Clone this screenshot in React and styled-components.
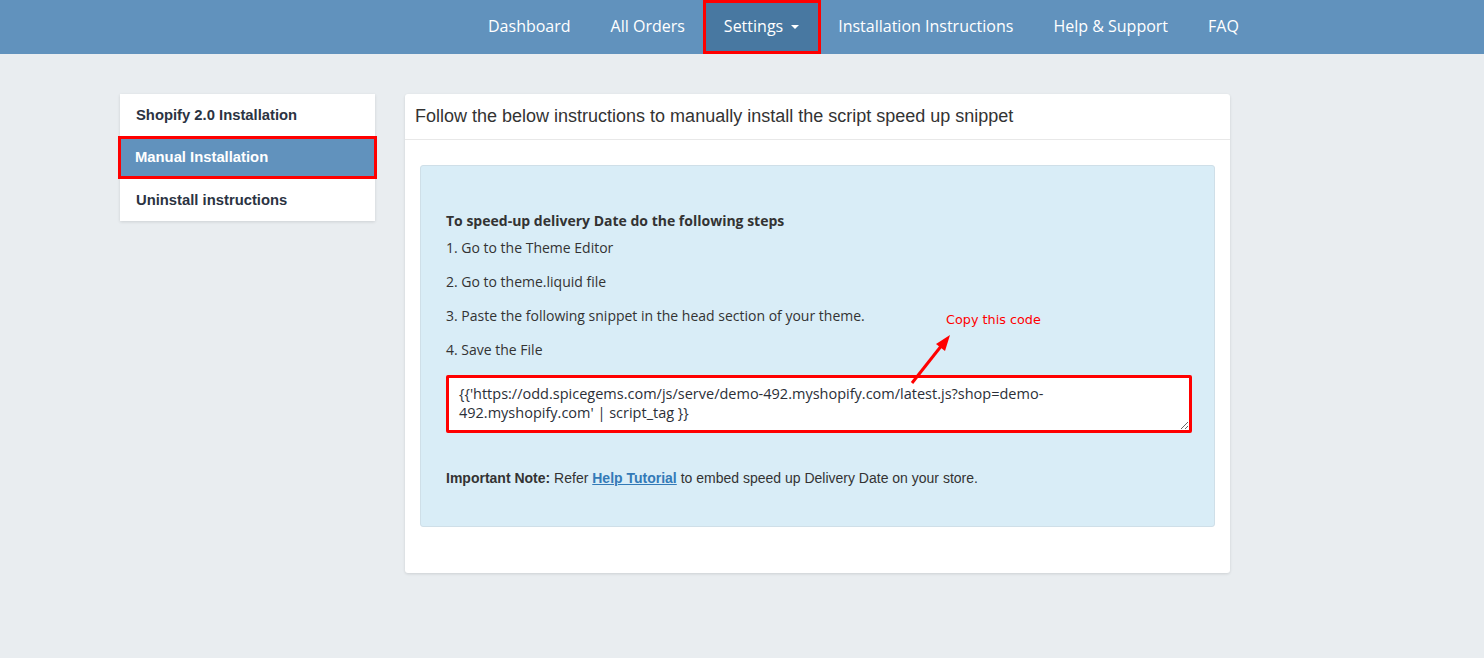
import React from "react";
import styled, { createGlobalStyle } from "styled-components";

const Global = createGlobalStyle`
  html, body { margin: 0; padding: 0; }
  body {
    background: #e9edf0;
    font-family: "Open Sans", Arial, sans-serif;
    min-height: 658px;
  }
  * { box-sizing: border-box; }
`;

const NavBar = styled.nav`
  height: 54px;
  background: #6192bd;
  display: flex;
  padding-left: 468px;
`;

const NavItem = styled.a`
  display: flex;
  align-items: center;
  gap: 8px;
  padding: 0 20px 2px;
  height: 54px;
  color: #fff;
  font-family: "Open Sans", sans-serif;
  font-size: 16px;
  text-decoration: none;
  background: ${(p) => (p.$active ? "#4878a1" : "transparent")};
  border: ${(p) => (p.$active ? "3px solid #ff0000" : "none")};
  ${(p) => p.$active && "padding: 0 19px 2px 18px; margin: 0 -3px 0 -2px;"}
`;

const Caret = styled.span`
  width: 0;
  height: 0;
  border-left: 4px solid transparent;
  border-right: 4px solid transparent;
  border-top: 4px solid #fff;
  margin-top: 2px;
`;

const Main = styled.div`
  display: flex;
  align-items: flex-start;
  gap: 30px;
  padding: 40px 0 0 120px;
`;

const Sidebar = styled.div`
  width: 255px;
  background: #fff;
  box-shadow: 0 1px 3px rgba(0, 0, 0, 0.12);
  display: flex;
  flex-direction: column;
`;

const SideItem = styled.div`
  height: ${(p) => (p.$active ? "43px" : "42px")};
  display: flex;
  align-items: center;
  padding-left: 16px;
  padding-bottom: ${(p) => (p.$active ? "2px" : "0")};
  font-family: "Liberation Sans", Arial, sans-serif;
  font-weight: 700;
  font-size: 14.8px;
  color: ${(p) => (p.$active ? "#fff" : "#2b3342")};
  background: ${(p) => (p.$active ? "#6192bd" : "transparent")};
  ${(p) =>
    p.$active &&
    `border: 3px solid #ff0000; margin: 0 -2px; padding-left: 14px;`}
`;

const Panel = styled.div`
  width: 825px;
  background: #fff;
  border-radius: 3px;
  box-shadow: 0 1px 3px rgba(0, 0, 0, 0.12);
  padding-bottom: 46px;
`;

const PanelHeader = styled.div`
  height: 46px;
  display: flex;
  align-items: center;
  padding-left: 10px;
  font-family: "Liberation Sans", Arial, sans-serif;
  font-size: 18px;
  color: #333;
  border-bottom: 1px solid #e8e8e8;
`;

const Alert = styled.div`
  position: relative;
  margin: 25px 15px 0;
  background: #d9edf7;
  border: 1px solid #cfdfe8;
  border-radius: 3px;
  padding: 45px 26px 38px 25px;
  color: #333;
`;

const Title = styled.div`
  font-family: "Open Sans", sans-serif;
  font-weight: 700;
  font-size: 14px;
  line-height: 20px;
  color: #333;
`;

const Step = styled.div`
  font-family: "Open Sans", sans-serif;
  font-size: 14px;
  line-height: 20px;
  color: #333;
  margin-top: ${(p) => (p.$first ? "7px" : "14px")};
`;

const Code = styled.textarea`
  display: block;
  width: 746px;
  height: 58px;
  margin-top: 15px;
  border: 3px solid #ff0000;
  border-radius: 2px;
  padding: 6px 40px 6px 10px;
  font-family: "Open Sans", sans-serif;
  font-size: 14.5px;
  line-height: 19px;
  color: #2b2f38;
  background: #fff;
  resize: vertical;
  outline: none;
`;

const Note = styled.p`
  margin: 35px 0 0;
  font-family: "Liberation Sans", Arial, sans-serif;
  font-size: 14px;
  line-height: 20px;
  color: #333;
`;

const Link = styled.a`
  color: #337ab7;
  font-weight: 700;
  text-decoration: underline;
`;

const Callout = styled.div`
  position: absolute;
  left: 525px;
  top: 146px;
  color: #ff0000;
  font-family: "DejaVu Sans", sans-serif;
  font-size: 12.8px;
`;

const ArrowSvg = styled.svg`
  position: absolute;
  left: 485px;
  top: 165px;
`;

export default function App() {
  return (
    <>
      <Global />
      <NavBar>
        <NavItem>Dashboard</NavItem>
        <NavItem>All Orders</NavItem>
        <NavItem $active>
          Settings <Caret />
        </NavItem>
        <NavItem>Installation Instructions</NavItem>
        <NavItem>Help &amp; Support</NavItem>
        <NavItem>FAQ</NavItem>
      </NavBar>
      <Main>
        <Sidebar>
          <SideItem>Shopify 2.0 Installation</SideItem>
          <SideItem $active>Manual Installation</SideItem>
          <SideItem>Uninstall instructions</SideItem>
        </Sidebar>
        <Panel>
          <PanelHeader>
            Follow the below instructions to manually install the script speed up snippet
          </PanelHeader>
          <Alert>
            <Title>To speed-up delivery Date do the following steps</Title>
            <Step $first>1. Go to the Theme Editor</Step>
            <Step>2. Go to theme.liquid file</Step>
            <Step>3. Paste the following snippet in the head section of your theme.</Step>
            <Step>4. Save the File</Step>
            <Code
              readOnly
              defaultValue="{{'https://odd.spicegems.com/js/serve/demo-492.myshopify.com/latest.js?shop=demo-492.myshopify.com' | script_tag }}"
            />
            <Note>
              <b>Important Note:</b> Refer <Link href="#">Help Tutorial</Link> to embed speed up Delivery Date on your store.
            </Note>
            <Callout>Copy this code</Callout>
            <ArrowSvg width="50" height="60" viewBox="0 0 50 60">
              <line x1="6" y1="52" x2="36" y2="14" stroke="#ff0000" strokeWidth="3" />
              <polygon points="44,4 30,13 39,20" fill="#ff0000" />
            </ArrowSvg>
          </Alert>
        </Panel>
      </Main>
    </>
  );
}
